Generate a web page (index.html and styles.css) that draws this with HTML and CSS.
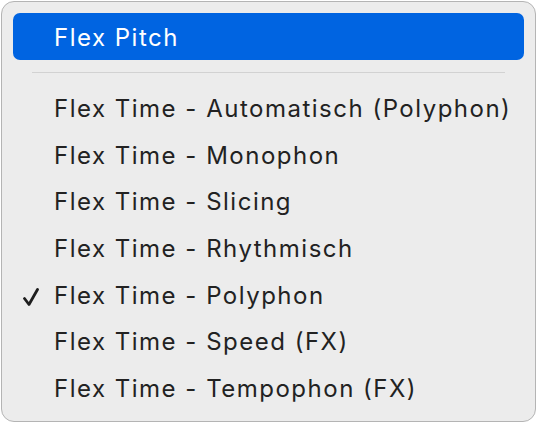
FILE: index.html
```html
<!DOCTYPE html>
<html lang="de">
<head>
    <meta charset="UTF-8">
    <title>Flex-Modus</title>
    <link rel="stylesheet" href="styles.css">
</head>
<body>
    <div class="menu">
        <div class="item selected">Flex Pitch</div>
        <div class="sep"></div>
        <div class="item">Flex Time - Automatisch (Polyphon)</div>
        <div class="item">Flex Time - Monophon</div>
        <div class="item">Flex Time - Slicing</div>
        <div class="item">Flex Time - Rhythmisch</div>
        <div class="item checked">
            <svg class="check" width="16" height="18" viewBox="0 0 16 18"><path d="M1.5 10.5 L6 16.5 L14.5 1.5" fill="none" stroke="#1e1e1e" stroke-width="2.8" stroke-linecap="round" stroke-linejoin="round"/></svg>
            Flex Time - Polyphon
        </div>
        <div class="item">Flex Time - Speed (FX)</div>
        <div class="item">Flex Time - Tempophon (FX)</div>
    </div>
</body>
</html>
```

FILE: styles.css
```css
body { margin: 0; background: #fff; font-family: Inter, "Noto Sans", sans-serif; }
.menu { width: 535px; height: 421px; box-sizing: border-box; margin: 1px; border: 1px solid #b4b4b4; border-radius: 13px; background: #ececec; padding: 11px 11px 0; }
.item { position: relative; height: 46.7px; line-height: 46.7px; padding-left: 41px; font-size: 24px; color: #222; letter-spacing: 1.5px; }
.selected { height: 47px; line-height: 49px; background: #0064e1; color: #fff; border-radius: 7px; }
.sep { height: 1px; background: #d2d2d2; margin: 12px 19px 13px; }
.check { position: absolute; left: 10px; top: 15px; }
```
